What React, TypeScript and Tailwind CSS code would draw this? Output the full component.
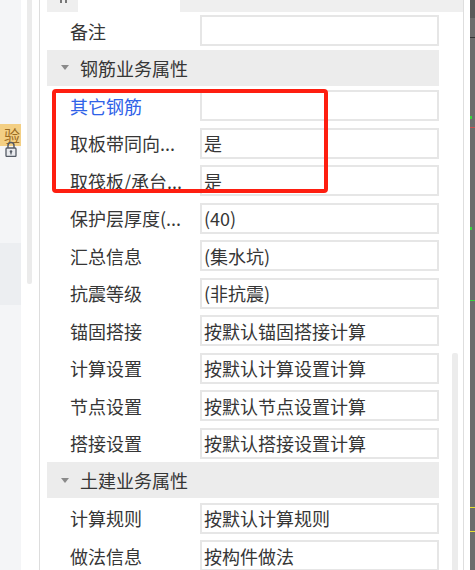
import { FC } from "react";

type Row =
  | { kind: "field"; label: string; value?: string; blue?: boolean }
  | { kind: "group"; title: string };

const rows: Row[] = [
  { kind: "field", label: "备注" },
  { kind: "group", title: "钢筋业务属性" },
  { kind: "field", label: "其它钢筋", blue: true },
  { kind: "field", label: "取板带同向...", value: "是" },
  { kind: "field", label: "取筏板/承台...", value: "是" },
  { kind: "field", label: "保护层厚度(...", value: "(40)" },
  { kind: "field", label: "汇总信息", value: "(集水坑)" },
  { kind: "field", label: "抗震等级", value: "(非抗震)" },
  { kind: "field", label: "锚固搭接", value: "按默认锚固搭接计算" },
  { kind: "field", label: "计算设置", value: "按默认计算设置计算" },
  { kind: "field", label: "节点设置", value: "按默认节点设置计算" },
  { kind: "field", label: "搭接设置", value: "按默认搭接设置计算" },
  { kind: "group", title: "土建业务属性" },
  { kind: "field", label: "计算规则", value: "按默认计算规则" },
  { kind: "field", label: "做法信息", value: "按构件做法" },
];

const PropRow: FC<{ row: Row }> = ({ row }) => {
  if (row.kind === "group") {
    return (
      <div className="h-[37.5px] shrink-0 w-[392px]">
        <div className="flex h-[36px] items-center bg-[#ececec]">
          <svg width="8" height="5" viewBox="0 0 8 5" className="ml-[14px] mr-[11px]">
            <path d="M0 0 L8 0 L4 5 Z" fill="#8a8a8a" />
          </svg>
          <span>{row.title}</span>
        </div>
      </div>
    );
  }
  return (
    <div className="flex h-[37.5px] shrink-0 items-center w-[392px]">
      <div
        className={`w-[153px] shrink-0 whitespace-nowrap pl-[23px] ${
          row.blue ? "text-[#2f62e8]" : ""
        }`}
      >
        {row.label}
      </div>
      <div className="flex h-[31px] flex-1 items-center border-2 border-[#e6e6e6] bg-white pl-[2px] -mt-[0.5px]">
        {row.value}
      </div>
    </div>
  );
};

const LockIcon: FC = () => (
  <svg width="12" height="16" viewBox="0 0 12 16" className="absolute left-[5px] top-[141px]">
    <path d="M3 7 V4.5 a3 3 0 0 1 6 0 V7" fill="none" stroke="#555b66" strokeWidth="1.5" />
    <rect x="1" y="7" width="10" height="8.5" rx="1" fill="#e9ebef" stroke="#555b66" strokeWidth="1.3" />
    <circle cx="6" cy="10.5" r="1.3" fill="#555b66" />
    <rect x="5.4" y="11" width="1.2" height="2.5" fill="#555b66" />
  </svg>
);

export default function App() {
  return (
    <div
      className="flex h-[570px] w-[475px] overflow-hidden bg-white text-[18px] leading-none text-[#363636]"
      style={{ fontFamily: '"Noto Sans CJK SC", "Noto Sans", sans-serif' }}
    >
      {/* left side panel */}
      <div className="relative flex w-[47px] shrink-0">
        <div className="flex w-[21px] flex-col bg-[#f4f5f7]">
          <div className="h-[124px]" />
          <div className="flex h-[22px] items-center justify-end bg-[#f3cf84] text-[16px] text-[#9a6a22]">
            <span className="pr-[1px]">验</span>
          </div>
          <div className="h-[97px]" />
          <div className="h-[62px] bg-[#eceef1]" />
        </div>
        <div className="w-[6px]" />
        <div className="h-[284px] w-[5px] rounded-b-[2px] bg-[#ebebeb]" />
        <div className="w-[7px]" />
        <div className="w-px bg-[#dddddd]" />
        <LockIcon />
      </div>

      {/* property panel */}
      <div className="flex w-[416px] shrink-0 flex-col">
        <div className="flex h-[12px] shrink-0">
          <div className="relative w-[31px] bg-[#efefef]">
            <span className="absolute left-[13px] top-0 h-[3px] w-[2px] bg-[#777]" />
            <span className="absolute left-[18px] top-0 h-[3px] w-[2px] bg-[#777]" />
          </div>
          <div className="w-[102px] bg-white" />
          <div className="flex-1 bg-[#efefef]" />
        </div>
        <div className="relative flex flex-1">
          <div className="flex flex-col">
            {rows.map((r, i) => (
              <PropRow key={i} row={r} />
            ))}
          </div>
          <div className="w-[13px]" />
          <div className="mt-[341px] w-[6px] rounded-t-[2px] bg-[#ececec]" />
          {/* red annotation */}
          <div className="pointer-events-none absolute left-[5px] top-[77px] h-[104px] w-[276px] rounded-[4px] border-4 border-[#fe1e10]" />
        </div>
      </div>

      {/* right edge */}
      <div className="w-px bg-[#dedede]" />
      <div className="w-[6px] bg-white" />
      <div className="relative flex-1 bg-[#6d6d6d]">
        <div className="h-[18px] bg-[#5a5a5a]" />
        <div className="absolute left-0 top-[37px] h-px w-full bg-[#333]" />
        <div className="absolute left-0 top-[116px] h-[3px] w-[2px] bg-[#35d93a]" />
        <div className="absolute left-0 top-[127px] h-px w-full bg-[#d05050]" />
        <div className="absolute left-0 top-[227px] h-[3px] w-[2px] bg-[#35d93a]" />
        <div className="absolute left-0 top-[300px] h-px w-full bg-[#35d93a]" />
        <div className="absolute left-0 top-[507px] h-px w-full bg-[#e8e030]" />
        <div className="absolute left-0 top-[531px] h-px w-full bg-[#e8e030]" />
      </div>
    </div>
  );
}
